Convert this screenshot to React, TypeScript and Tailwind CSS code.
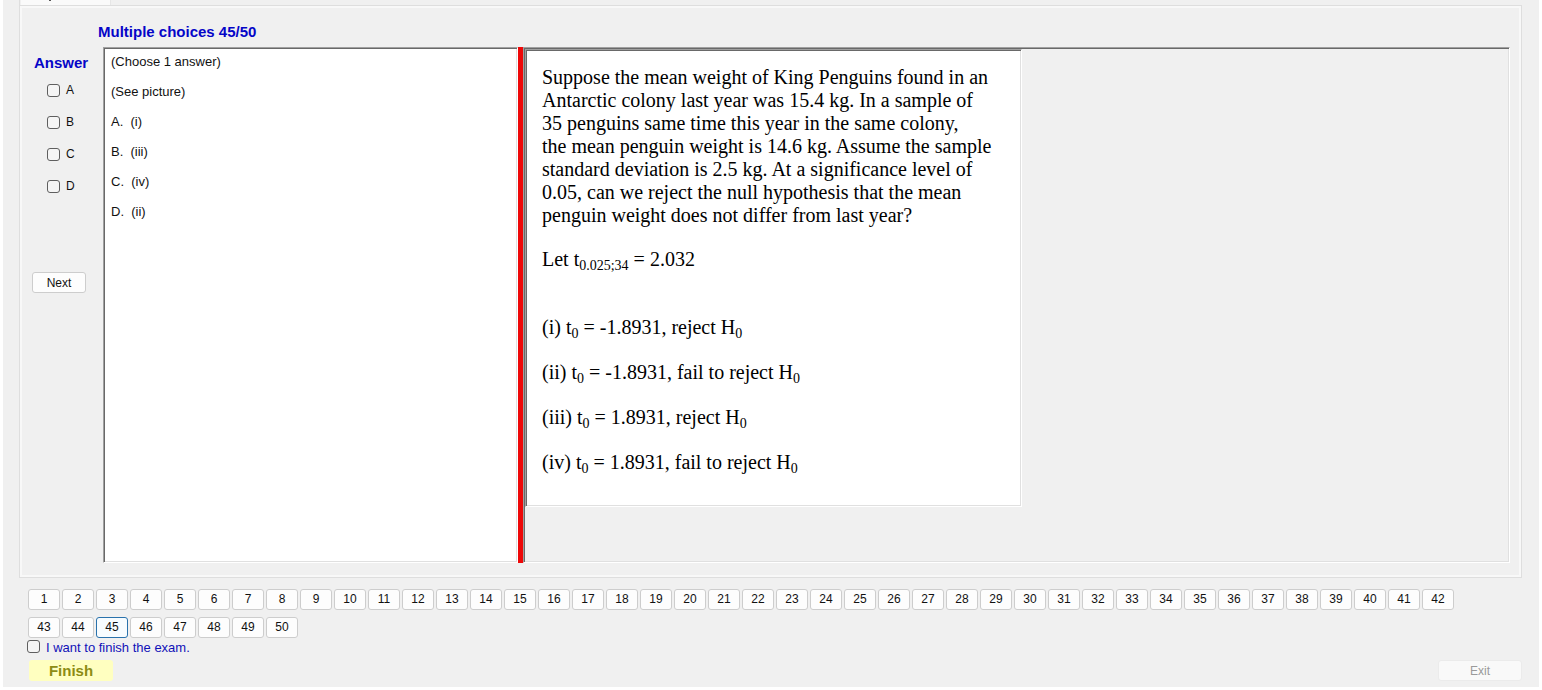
import type { ReactNode } from 'react';

const choices = ['A', 'B', 'C', 'D'];
const answerLines = ['A.  (i)', 'B.  (iii)', 'C.  (iv)', 'D.  (ii)'];
const questionCount = 50;
const currentQuestion = 45;

const sunken =
  'border border-t-[#a0a0a0] border-l-[#a0a0a0] border-r-white border-b-white shadow-[inset_1px_1px_#696969,inset_-1px_-1px_#e0e0e0]';

function Check({ label, className = 'items-center' }: { label: string; className?: string }) {
  return (
    <label className={'flex h-4 gap-[6px] ' + className}>
      <input
        type="checkbox"
        className="h-[13px] w-[13px] shrink-0 appearance-none rounded-[3px] border border-[#5f5f5f] bg-[#f5f5f5] checked:bg-[#0067c0]"
      />
      {label}
    </label>
  );
}

function Sub({ children }: { children: ReactNode }) {
  return <sub className="text-[14px] leading-none">{children}</sub>;
}

function PictureQuestion() {
  return (
    <div
      className={
        'w-[497px] bg-white pt-4 pr-3 pb-8 pl-4 font-["Liberation_Serif",serif] text-[20px] leading-[23px] whitespace-nowrap text-black ' +
        sunken
      }
    >
      <p>
        Suppose the mean weight of King Penguins found in an
        <br />
        Antarctic colony last year was 15.4 kg. In a sample of
        <br />
        35 penguins same time this year in the same colony,
        <br />
        the mean penguin weight is 14.6 kg. Assume the sample
        <br />
        standard deviation is 2.5 kg. At a significance level of
        <br />
        0.05, can we reject the null hypothesis that the mean
        <br />
        penguin weight does not differ from last year?
      </p>
      <p className="mt-[21px] h-[23px]">
        Let t<Sub>0.025;34</Sub> = 2.032
      </p>
      <div className="mt-[45px] flex flex-col gap-[22px]">
        <p className="h-[23px]">
          (i) t<Sub>0</Sub> = -1.8931, reject H<Sub>0</Sub>
        </p>
        <p className="h-[23px]">
          (ii) t<Sub>0</Sub> = -1.8931, fail to reject H<Sub>0</Sub>
        </p>
        <p className="h-[23px]">
          (iii) t<Sub>0</Sub> = 1.8931, reject H<Sub>0</Sub>
        </p>
        <p className="h-[23px]">
          (iv) t<Sub>0</Sub> = 1.8931, fail to reject H<Sub>0</Sub>
        </p>
      </div>
    </div>
  );
}

export default function App() {
  return (
    <div className='flex min-h-screen flex-col bg-white px-[3px] pb-[3px] font-["Liberation_Sans",sans-serif] text-[12px] text-[#111]'>
      <main className="flex flex-1 flex-col bg-[#f0f0f0] pr-[17px] pb-[6px] pl-4">
        <div className="flex h-[5px] border-l border-[#dedede] pl-px">
          <div className="w-[90px] border-r border-[#e6e6e6] bg-[#fafafa] pl-[28px]">
            <div className="h-px w-[2px] bg-[#555]" />
          </div>
        </div>

        <section className="flex flex-1 flex-col border border-[#dedede]">
          <div className="flex flex-1 flex-col border-2 border-[#f8f8f8] pt-[14px] pr-[9px] pb-3">
            <h1 className="mb-[5px] pl-[76px] text-[15px] leading-5 font-bold text-[#0505c8]">
              Multiple choices 45/50
            </h1>
            <div className="flex flex-1">
              <div className="flex w-[81px] shrink-0 flex-col items-start pt-[6px]">
                <h2 className="pl-3 text-[15px] leading-5 font-bold text-[#0505c8]">Answer</h2>
                <div className="mt-[9px] flex flex-col gap-4 pl-[25px]">
                  {choices.map((c) => (
                    <Check key={c} label={c} />
                  ))}
                </div>
                <button className="mt-[78px] ml-[10px] h-[21px] w-[54px] rounded-[3px] border border-[#cdcdcd] bg-[#fdfdfd]">
                  Next
                </button>
              </div>

              <div
                className={
                  'flex w-[415px] shrink-0 flex-col gap-[6px] bg-white pt-[2px] pl-[7px] text-[13px] leading-6 whitespace-pre ' +
                  sunken
                }
              >
                <p>(Choose 1 answer)</p>
                <p>(See picture)</p>
                {answerLines.map((line) => (
                  <p key={line}>{line}</p>
                ))}
              </div>

              <div className="w-[5px] shrink-0 bg-[#ee0808]" />

              <div className={'min-w-0 flex-1 p-px ' + sunken}>
                <PictureQuestion />
              </div>
            </div>
          </div>
        </section>

        <nav className="mt-[11px] flex flex-wrap gap-x-[2px] gap-y-[7px] pr-12 pl-[9px]">
          {Array.from({ length: questionCount }, (_, i) => i + 1).map((n) => (
            <button
              key={n}
              className={
                'h-[21px] w-8 rounded-[3px] border text-center leading-[19px] ' +
                (n === currentQuestion
                  ? 'border-[#2a72ac] bg-[#f7fcff]'
                  : 'border-[#cdcdcd] bg-[#fdfdfd]')
              }
            >
              {n}
            </button>
          ))}
        </nav>

        <Check
          label="I want to finish the exam."
          className="mt-[2px] ml-2 items-start self-start text-[13px] leading-4 text-[#1010b8]"
        />

        <div className="mt-1 flex justify-between pl-[10px]">
          <button className="h-[21px] w-[84px] rounded-[3px] bg-[#ffffc0] text-[15px] leading-[21px] font-bold text-[#8c8c14]">
            Finish
          </button>
          <button
            disabled
            className="h-[21px] w-[84px] rounded-[3px] border border-[#ebebeb] bg-[#f9f9f9] text-[#9a9a9a]"
          >
            Exit
          </button>
        </div>
      </main>
    </div>
  );
}
